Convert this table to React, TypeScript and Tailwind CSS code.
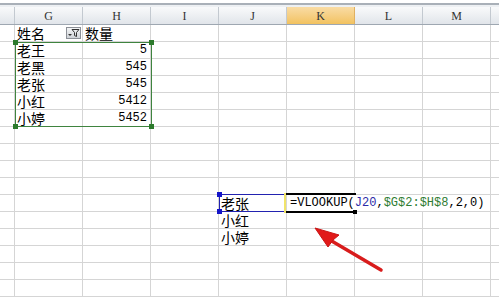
import React from "react"

const cols = ["G", "H", "I", "J", "K", "L", "M"]

// rows below the header, 17px each
const rowCount = 16

const names = ["老王", "老黑", "老张", "小红", "小婷"]
const amounts = [5, 545, 545, 5412, 5452]

const cjk = "block font-['Noto_Sans_CJK_SC',sans-serif] text-[14px] leading-[14px] text-black"
const mono = "block font-['Liberation_Mono',monospace] text-[12px] leading-[14px]"

function FilterButton() {
  return (
    <div className="ml-auto mr-[1px] w-[15px] h-[12px] border border-[#8c9097] bg-gradient-to-b from-[#f4f5f6] to-[#cfd3d8] flex items-center justify-center">
      <svg width="13" height="10" viewBox="0 0 13 10">
        <path d="M1 6 L5 6 L3 8 Z" fill="#333" />
        <path d="M5 1.5 L12 1.5 L9.5 4.5 L9.5 8.5 L7.5 7.5 L7.5 4.5 Z" fill="none" stroke="#333" strokeWidth="1" />
      </svg>
    </div>
  )
}

function Cell({ children, className = "" }: { children?: React.ReactNode; className?: string }) {
  return (
    <div className={`w-[68px] h-full shrink-0 border-r border-b border-[#d5d5d5] flex items-center px-[2px] ${className}`}>
      {children}
    </div>
  )
}

function Row({ index }: { index: number }) {
  const cells: React.ReactNode[] = []

  if (index === 0) {
    cells.push(
      <Cell key="g" className="pr-0">
        <span className={cjk}>姓名</span>
        <FilterButton />
      </Cell>,
      <Cell key="h"><span className={cjk}>数量</span></Cell>,
      <Cell key="i" />, <Cell key="j" />, <Cell key="k" />, <Cell key="l" />, <Cell key="m" />
    )
  } else if (index >= 1 && index <= 5) {
    cells.push(
      <Cell key="g"><span className={cjk}>{names[index - 1]}</span></Cell>,
      <Cell key="h" className="justify-end pr-[3px]"><span className={`${mono} text-black`}>{amounts[index - 1]}</span></Cell>,
      <Cell key="i" />, <Cell key="j" />, <Cell key="k" />, <Cell key="l" />, <Cell key="m" />
    )
  } else if (index === 10) {
    cells.push(
      <Cell key="g" />, <Cell key="h" />, <Cell key="i" />,
      <Cell key="j"><span className={cjk}>老张</span></Cell>,
      // formula text runs across K:M
      <div key="k" className="w-[204px] h-full shrink-0 border-r border-b border-[#d5d5d5] flex items-center pl-[3px]">
        <span className={`${mono} whitespace-nowrap text-black`}>
          =VLOOKUP(<span className="text-[#2b2ba8]">J20</span>,<span className="text-[#2f7d32]">$G$2:$H$8</span>,2,0)
        </span>
      </div>
    )
  } else if (index === 11 || index === 12) {
    cells.push(
      <Cell key="g" />, <Cell key="h" />, <Cell key="i" />,
      <Cell key="j"><span className={cjk}>{index === 11 ? "小红" : "小婷"}</span></Cell>,
      <Cell key="k" />, <Cell key="l" />, <Cell key="m" />
    )
  } else {
    cols.forEach((c) => cells.push(<Cell key={c} />))
  }

  return (
    <div className="flex h-[17px]">
      <div className="w-[15px] h-full shrink-0 border-r border-b border-[#d5d5d5]" />
      {cells}
      <div className="flex-1 h-full border-b border-[#d5d5d5]" />
    </div>
  )
}

export default function App() {
  return (
    <div className="relative w-[499px] h-[301px] overflow-hidden bg-white select-none">
      {/* top edge of the sheet window */}
      <div className="h-[3px] bg-white" />
      <div className="h-[2px] bg-[#a9b0b8]" />
      <div className="h-[2px] bg-[#edf0f3]" />

      {/* column headers */}
      <div className="flex h-[18px] border-b border-[#9ea7b1] font-['Liberation_Serif',serif] text-[12px] text-[#333]">
        <div className="w-[15px] shrink-0 border-r border-[#c3c9d0] bg-gradient-to-b from-[#f9fafb] to-[#e1e5ea]" />
        {cols.map((c) => (
          <div
            key={c}
            className={`w-[68px] shrink-0 border-r flex items-center justify-center ${
              c === "K"
                ? "border-[#e0b060] bg-gradient-to-b from-[#f9dca4] to-[#f2c25f]"
                : "border-[#c3c9d0] bg-gradient-to-b from-[#f9fafb] to-[#e1e5ea]"
            }`}
          >
            {c}
          </div>
        ))}
        <div className="flex-1 bg-gradient-to-b from-[#f9fafb] to-[#e1e5ea]" />
      </div>

      {Array.from({ length: rowCount }, (_, i) => (
        <Row key={i} index={i} />
      ))}

      {/* copy range G2:H6 */}
      <div className="absolute left-[15px] top-[42px] w-[137px] h-[85px] border border-[#3f843f] pointer-events-none">
        <div className="absolute -left-[3px] -top-[3px] w-[5px] h-[5px] bg-[#2c7a2c]" />
        <div className="absolute -right-[3px] -top-[3px] w-[5px] h-[5px] bg-[#2c7a2c]" />
        <div className="absolute -left-[3px] -bottom-[3px] w-[5px] h-[5px] bg-[#2c7a2c]" />
        <div className="absolute -right-[3px] -bottom-[3px] w-[5px] h-[5px] bg-[#2c7a2c]" />
      </div>

      {/* referenced cell J20 */}
      <div className="absolute left-[219px] top-[194px] w-[67px] h-[18px] border border-[#2222b0] pointer-events-none">
        <div className="absolute -left-[3px] -top-[3px] w-[5px] h-[5px] bg-[#1414c8]" />
        <div className="absolute -left-[3px] -bottom-[3px] w-[5px] h-[5px] bg-[#1414c8]" />
      </div>

      {/* cell being edited */}
      <div className="absolute left-[286px] top-[193px] w-[70px] h-[20px] border-t-2 border-b-2 border-black pointer-events-none">
        <div className="absolute -left-[2px] -top-[2px] w-[2px] h-[20px] bg-[#f1e46a]" />
        <div className="absolute -right-[1px] -bottom-[3px] w-[4px] h-[4px] bg-black" />
      </div>

      {/* red pointer arrow */}
      <svg className="absolute left-0 top-0 pointer-events-none" width="499" height="301" viewBox="0 0 499 301">
        <line x1="381" y1="270" x2="330" y2="240" stroke="#d81c1c" strokeWidth="3.5" strokeLinecap="round" />
        <path d="M315 228 L339 235 L333 240 L328 247 Z" fill="#e11919" stroke="#c91515" strokeWidth="1" strokeLinejoin="round" />
      </svg>
    </div>
  )
}
